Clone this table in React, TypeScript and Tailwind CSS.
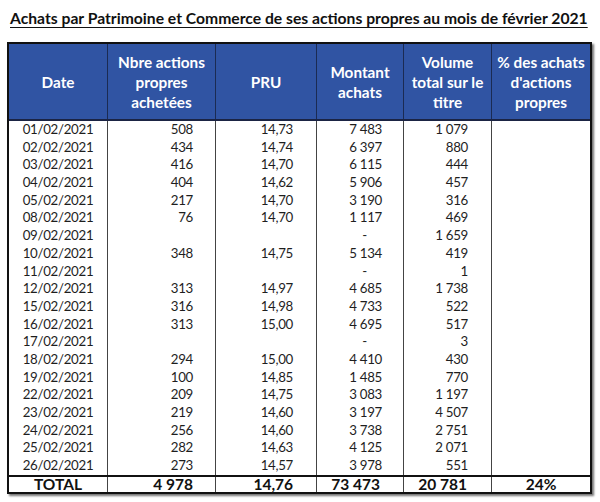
import React from "react";

type Row = [string, string, string, string, string];

const rows: Row[] = [
  ["01/02/2021", "508", "14,73", "7 483", "1 079"],
  ["02/02/2021", "434", "14,74", "6 397", "880"],
  ["03/02/2021", "416", "14,70", "6 115", "444"],
  ["04/02/2021", "404", "14,62", "5 906", "457"],
  ["05/02/2021", "217", "14,70", "3 190", "316"],
  ["08/02/2021", "76", "14,70", "1 117", "469"],
  ["09/02/2021", "", "", "-", "1 659"],
  ["10/02/2021", "348", "14,75", "5 134", "419"],
  ["11/02/2021", "", "", "-", "1"],
  ["12/02/2021", "313", "14,97", "4 685", "1 738"],
  ["15/02/2021", "316", "14,98", "4 733", "522"],
  ["16/02/2021", "313", "15,00", "4 695", "517"],
  ["17/02/2021", "", "", "-", "3"],
  ["18/02/2021", "294", "15,00", "4 410", "430"],
  ["19/02/2021", "100", "14,85", "1 485", "770"],
  ["22/02/2021", "209", "14,75", "3 083", "1 197"],
  ["23/02/2021", "219", "14,60", "3 197", "4 507"],
  ["24/02/2021", "256", "14,60", "3 738", "2 751"],
  ["25/02/2021", "282", "14,63", "4 125", "2 071"],
  ["26/02/2021", "273", "14,57", "3 978", "551"],
];

const grid = "grid grid-cols-[98px_108px_101px_87px_88px_99px]";

function HeadCell({ lines, first }: { lines: string[]; first?: boolean }) {
  return (
    <div
      className={`flex flex-col items-center justify-center text-center ${
        first ? "" : "border-l border-[#1b2b52]"
      }`}
    >
      {lines.map((l, i) => (
        <span key={i} className="block leading-[20px]">
          {l}
        </span>
      ))}
    </div>
  );
}

export default function App() {
  return (
    <div
      className="w-[600px] h-[502px] bg-white overflow-hidden"
      style={{ fontFamily: "Lato, 'Open Sans', sans-serif" }}
    >
      <div className="pt-[6px] pl-[10px] h-[42px]">
        <span className="text-[15.7px] font-bold text-[#111] underline underline-offset-[3px] decoration-1 leading-[20px]">
          Achats par Patrimoine et Commerce de ses actions propres au mois de février 2021
        </span>
      </div>
      <div className="ml-[7px] w-[585px] border-2 border-[#111] shadow-[2px_2px_2px_rgba(0,0,0,0.55)]">
        <div
          className={`${grid} h-[77px] bg-[#3054a3] text-white font-bold text-[15.3px] border-b-2 border-[#1b2444]`}
        >
          <HeadCell lines={["Date"]} first />
          <HeadCell lines={["Nbre actions", "propres", "achetées"]} />
          <HeadCell lines={["PRU"]} />
          <HeadCell lines={["Montant", "achats"]} />
          <HeadCell lines={["Volume", "total sur le", "titre"]} />
          <HeadCell lines={["% des achats", "d'actions", "propres"]} />
        </div>
        <div className="text-[13.3px] text-[#1e1e1e] tracking-[-0.3px]">
          {rows.map((r, i) => (
            <div key={i} className={`${grid} h-[17.7px] leading-[17.7px]`}>
              <div className="text-center">{r[0]}</div>
              <div className="border-l border-[#444] text-right pr-[22px]">{r[1]}</div>
              <div className="border-l border-[#444] text-right pr-[23px]">{r[2]}</div>
              <div
                className={`border-l border-[#444] text-right ${
                  r[3] === "-" ? "pr-[36px]" : "pr-[21px]"
                }`}
              >
                {r[3]}
              </div>
              <div className="border-l border-[#444] text-right pr-[23px]">{r[4]}</div>
              <div className="border-l border-[#444]"></div>
            </div>
          ))}
        </div>
        <div
          className={`${grid} h-[17px] leading-[15px] border-t-2 border-[#111] text-[15.5px] font-bold text-[#111]`}
        >
          <div className="text-center">TOTAL</div>
          <div className="border-l border-[#444] text-right pr-[22px]">4 978</div>
          <div className="border-l border-[#444] text-right pr-[23px]">14,76</div>
          <div className="border-l border-[#444] text-right pr-[23px]">73 473</div>
          <div className="border-l border-[#444] text-right pr-[24px]">20 781</div>
          <div className="border-l border-[#444] text-center">24%</div>
        </div>
      </div>
    </div>
  );
}
